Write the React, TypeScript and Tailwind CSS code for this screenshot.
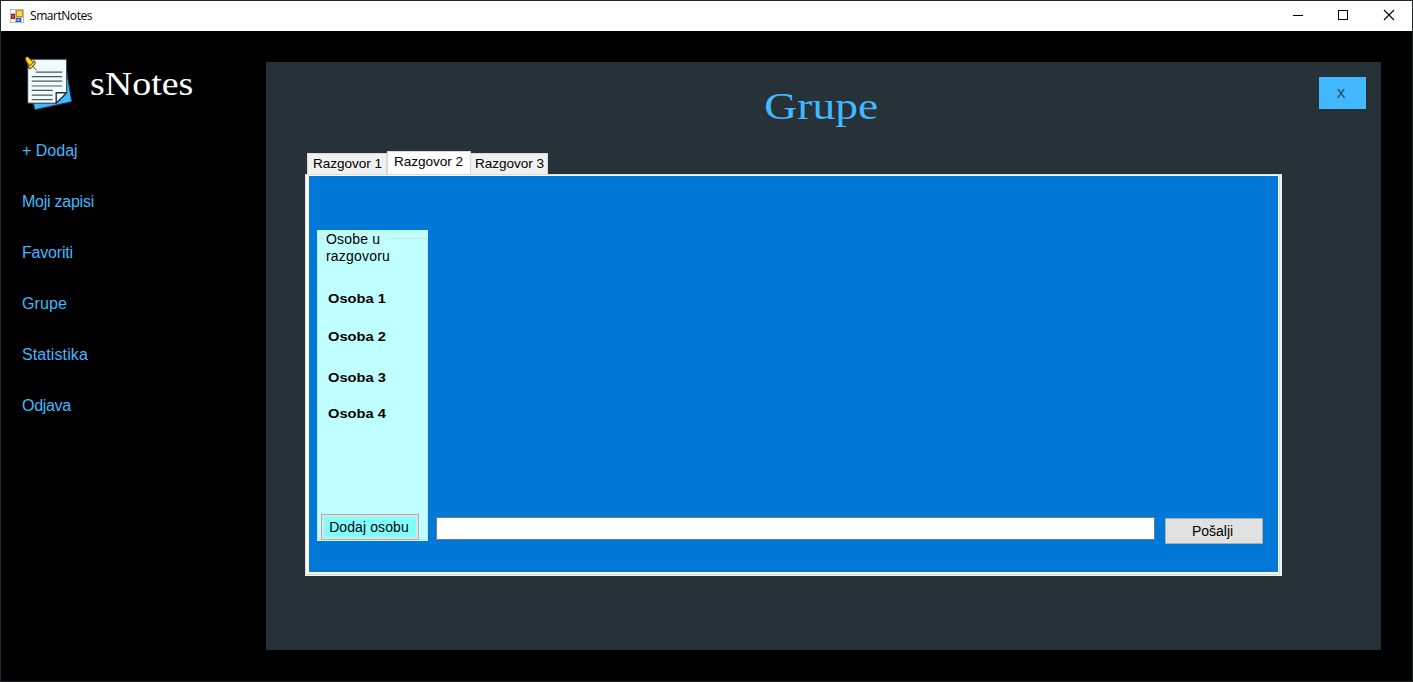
import React from "react";

const navItems = [
  { label: "+ Dodaj", tracking: "" },
  { label: "Moji zapisi", tracking: "tracking-[-0.25px]" },
  { label: "Favoriti", tracking: "tracking-[-0.2px]" },
  { label: "Grupe", tracking: "tracking-[0.1px]" },
  { label: "Statistika", tracking: "tracking-[0.1px]" },
  { label: "Odjava", tracking: "tracking-[-0.3px]" },
];

function AppIcon() {
  return (
    <svg width="14" height="14" viewBox="0 0 14 14" shapeRendering="crispEdges">
      <rect width="14" height="14" fill="#b9bcbf" />
      <rect x="1" y="1" width="4" height="3" fill="#fff" />
      <rect x="1" y="10" width="4" height="3" fill="#fff" />
      <rect x="12" y="9" width="1" height="4" fill="#fff" />
      <rect x="1" y="5" width="4" height="5" fill="#a11d14" />
      <rect x="2" y="6" width="2" height="3" fill="#d8442f" />
      <rect x="6" y="1" width="7" height="7" fill="#c98a08" />
      <rect x="7" y="2" width="5" height="5" fill="#ffd75a" />
      <rect x="6" y="9" width="5" height="4" fill="#2d62c4" />
      <rect x="7" y="10" width="3" height="2" fill="#6fa4f0" />
    </svg>
  );
}

function NotesLogo() {
  return (
    <svg width="50" height="56" viewBox="0.8 0.3 50 56">
      <path d="M41 7L47.5 46L10.5 54L9 46Z" fill="#41b8ff" stroke="#16425e" strokeWidth="1" />
      <path d="M3.5 3.5H42.5V36L32 47.5H3.5Z" fill="#f1faff" stroke="#263238" strokeWidth="1" />
      <path d="M32 47.5V37H42.5Z" fill="#f1faff" stroke="#263238" strokeWidth="1.4" strokeLinejoin="round" />
      <g stroke="#455a64" strokeWidth="1.2">
        <path d="M11.5 16.5H38M7.5 21H38M7.5 25.5H38M7.5 30.3H38M7.5 34.7H28.5M7.5 39.5H28.5M7.5 44H28.5" />
      </g>
      <path d="M8 10L12.5 14.5" stroke="#37474f" strokeWidth="1" />
      <path d="M1 2L3.5 0.8L5 2.5L8 5.5L10.5 5.5L11 8L6.5 13L4.5 12.5L4.5 9L1.8 5.5Z" fill="#ffd51c" stroke="#3f3a12" strokeWidth="1" />
      <path d="M5 10.5L9.5 6.5" stroke="#55470a" strokeWidth="1" />
    </svg>
  );
}

function TitleBar() {
  return (
    <header className="flex h-[30px] shrink-0 items-center bg-white pl-[9px] text-black">
      <AppIcon />
      <span className="ml-[6px] font-['Open_Sans',sans-serif] text-[12px] leading-[16px] tracking-[-0.45px]">SmartNotes</span>
      <div className="ml-auto flex">
        <svg width="138" height="30" viewBox="0 0 138 30" fill="none" stroke="#000">
          <path d="M19 14.5H29" shapeRendering="crispEdges" />
          <rect x="64.5" y="9.5" width="9" height="9" shapeRendering="crispEdges" />
          <path d="M110 9L120 19M120 9L110 19" strokeWidth="1.1" />
        </svg>
      </div>
    </header>
  );
}

function Sidebar() {
  return (
    <aside className="w-[265px] shrink-0 text-[#41b8ff]">
      <div className="flex h-[94px] items-start pt-[25px] pl-[24px]">
        <NotesLogo />
        <h1 className="mt-[9px] ml-[15px] origin-left scale-x-[1.15] font-['Liberation_Serif',serif] text-[33px] leading-[38px] text-white">sNotes</h1>
      </div>
      <nav className="flex flex-col pl-[21px] text-[16px] leading-[51px]">
        {navItems.map((item) => (
          <a key={item.label} className={`block h-[51px] ${item.tracking}`}>{item.label}</a>
        ))}
      </nav>
    </aside>
  );
}

function Tabs() {
  return (
    <div className="ml-[2px] flex h-[23px] items-end text-[13.6px] leading-[16px] tracking-[-0.05px]">
      <div className="h-[21px] w-[80px] border border-b-0 border-[#d9d9d9] bg-[#f0f0f0] pt-[2px] pl-[5px] whitespace-nowrap">Razgovor 1</div>
      <div className="h-[23px] w-[84px] border border-b-0 border-[#d9d9d9] bg-white pt-[2px] pl-[6px] whitespace-nowrap">Razgovor 2</div>
      <div className="h-[21px] w-[77px] border border-b-0 border-l-0 border-[#d9d9d9] bg-[#f0f0f0] pt-[2px] pl-[4px] whitespace-nowrap">Razgovor 3</div>
    </div>
  );
}

function People() {
  return (
    <section className="flex h-[311px] w-[111px] flex-col bg-[#c0ffff]">
      <div className="mt-[8px] flex h-[302px] flex-col border border-[#d3dfdf]">
        <div className="-mt-[8px] ml-[6px] w-[69px] bg-[#c0ffff] pl-[2px] text-[14px] leading-[17px] tracking-[0.2px]">
          Osobe u razgovoru
        </div>
        <ul className="ml-[10px] origin-left scale-x-[1.1] text-[13.33px] leading-[16px] font-bold">
          <li className="mt-[26px]">Osoba 1</li>
          <li className="mt-[22px]">Osoba 2</li>
          <li className="mt-[25px]">Osoba 3</li>
          <li className="mt-[20px]">Osoba 4</li>
        </ul>
        <button className="mt-auto -mb-px ml-[3px] h-[26px] w-[98px] shrink-0 border border-[#adadad] bg-[#e1e1e1] p-[2px]">
          <span className="block h-[20px] bg-[#80ffff] pr-[2px] text-[14px] leading-[20px] tracking-[0.1px] whitespace-nowrap">Dodaj osobu</span>
        </button>
      </div>
    </section>
  );
}

export default function App() {
  return (
    <div className="flex h-[682px] w-[1413px] flex-col overflow-hidden border border-[#22272a] bg-black font-['Liberation_Sans',Arial,sans-serif] text-black">
      <TitleBar />
      <div className="flex flex-1">
        <Sidebar />
        <main className="mt-[31px] flex h-[588px] w-[1115px] flex-col bg-[#263238]">
          <div className="flex h-[89px]">
            <div className="flex flex-1 justify-center pl-[58px]">
              <h2 className="mt-[24px] scale-x-[1.23] font-['Liberation_Serif',serif] text-[37px] leading-[42px] text-[#41b8ff]">Grupe</h2>
            </div>
            <button className="mt-[15px] mr-[15px] h-[32px] w-[47px] bg-[#41b8ff] pt-px pr-[3px] text-[13px] text-[#263238]">X</button>
          </div>
          <div className="ml-[39px] w-[977px]">
            <Tabs />
            <div className="h-[402px] bg-[#f0f0f0] pr-[2px] pb-px">
              <div className="flex h-full border border-[#dcdcdc] bg-white pt-px pr-px pb-[2px] pl-[3px]">
                <div className="flex flex-1 bg-[#0078d7] pt-[54px] pl-[8px]">
                  <People />
                  <input className="mt-[287px] ml-[8px] h-[23px] w-[719px] border border-[#7a7a7a] bg-white outline-none" />
                  <button className="mt-[288px] ml-[10px] h-[26px] w-[98px] border border-[#adadad] bg-[#e1e1e1] pt-px pr-[3px] text-[14px]">Pošalji</button>
                </div>
              </div>
            </div>
          </div>
        </main>
      </div>
    </div>
  );
}
